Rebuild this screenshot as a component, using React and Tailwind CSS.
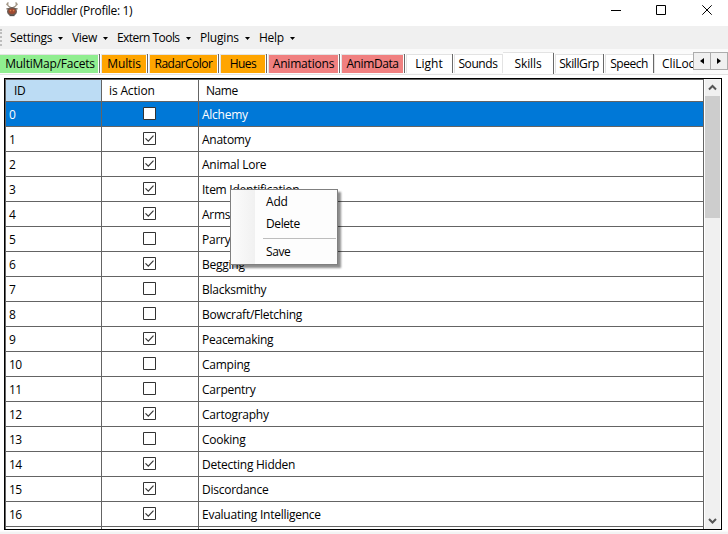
import React from 'react';

const menus = [
  { label: 'Settings', w: 'w-[62px]', t: 'tracking-[-0.28px]' },
  { label: 'View', w: 'w-[45px]', t: 'tracking-[-0.3px]' },
  { label: 'Extern Tools', w: 'w-[83px]', t: 'tracking-[-0.55px]' },
  { label: 'Plugins', w: 'w-[59px]', t: 'tracking-[-0.2px]' },
  { label: 'Help', w: 'w-[45px]', t: 'tracking-[-0.3px]' },
];

const tabs = [
  { label: 'MultiMap/Facets', w: 'w-[100px]', bg: 'bg-[#90ee90]', t: 'tracking-[-0.22px]', first: true },
  { label: 'Multis', w: 'w-[48px]', bg: 'bg-[#ffa500]', t: 'tracking-[-0.1px]' },
  { label: 'RadarColor', w: 'w-[71px]', bg: 'bg-[#ffa500]', t: 'tracking-[-0.5px]' },
  { label: 'Hues', w: 'w-[48px]', bg: 'bg-[#ffa500]', t: 'tracking-[-0.5px]' },
  { label: 'Animations', w: 'w-[73px]', bg: 'bg-[#f08080]', t: 'tracking-[-0.2px]' },
  { label: 'AnimData', w: 'w-[65px]', bg: 'bg-[#f08080]', t: 'tracking-[-0.4px]' },
  { label: 'Light', w: 'w-[48px]', bg: 'bg-white', t: 'tracking-[0px]' },
  { label: 'Sounds', w: 'w-[50px]', bg: 'bg-white', t: 'tracking-[-0.4px]', noEdge: true },
  { label: 'Skills', w: 'w-[51px]', bg: 'bg-white', t: 'tracking-[-0.1px]', selected: true },
  { label: 'SkillGrp', w: 'w-[50px]', bg: 'bg-white', t: 'tracking-[-0.4px]' },
  { label: 'Speech', w: 'w-[50px]', bg: 'bg-white', t: 'tracking-[-0.5px]' },
];

const skills = [
  ['Alchemy', false],
  ['Anatomy', true],
  ['Animal Lore', true],
  ['Item Identification', true],
  ['Arms Lore', true],
  ['Parrying', false],
  ['Begging', true],
  ['Blacksmithy', false],
  ['Bowcraft/Fletching', false],
  ['Peacemaking', true],
  ['Camping', false],
  ['Carpentry', false],
  ['Cartography', true],
  ['Cooking', false],
  ['Detecting Hidden', true],
  ['Discordance', true],
  ['Evaluating Intelligence', true],
];

function AppIcon() {
  return (
    <svg className="block" width="12" height="16" viewBox="0 0 12 16">
      <path d="M4.500 6C2 5.500 1 4 2.200 1.200M7.500 6c2.500-.5 3.500-2 2.300-4.800M1.500 4L.4 2.800M10.500 4l1.100-1.200" fill="none" stroke="#a39787" strokeWidth="1.300" />
      <path d="M.4 7.800h11.200" stroke="#8b8075" strokeWidth="1.500" />
      <ellipse cx="6" cy="10.400" rx="5" ry="4.400" fill="#6b5c54" />
      <ellipse cx="6" cy="10.200" rx="3.500" ry="2.700" fill="#a04a30" />
      <circle cx="4.500" cy="9.600" r=".8" fill="#d9804f" />
      <circle cx="7.600" cy="9.600" r=".8" fill="#d9804f" />
      <path d="M3.500 14.500h5" stroke="#55504e" strokeWidth="1.300" />
    </svg>
  );
}

function TitleBar() {
  return (
    <header className="flex h-[26px] shrink-0 items-start bg-white">
      <div className="pl-[6px] pt-[1px]"><AppIcon /></div>
      <div className="grow pl-[7.500px] pt-[2px] leading-[18px] tracking-[-0.33px]">UoFiddler (Profile: 1)</div>
      <svg className="block" width="120" height="22" viewBox="608 0 120 22" fill="none" stroke="#000">
        <path d="M611 10.500h10" />
        <path d="M656.500 5.500h9v9h-9z" />
        <path d="M702.300 5.300l9.400 9.400M711.700 5.300l-9.400 9.400" />
      </svg>
    </header>
  );
}

function MenuBar() {
  return (
    <nav className="flex h-[23px] shrink-0 items-center bg-[#f0f0f0]">
      <div className="h-[17px] w-px border-l-2 border-dotted border-[#bdbdbd]" />
      <div className="flex pl-[8px]">
        {menus.map((m) => (
          <div key={m.label} className={`flex shrink-0 items-center justify-between pr-[10px] leading-[18px] ${m.w} ${m.t}`}>
            <span className="whitespace-nowrap">{m.label}</span>
            <svg className="-mr-[1px] mt-[2px] block shrink-0" width="5" height="3" viewBox="0 0 5 3"><path d="M0 0h5L2.500 3z" fill="#000" /></svg>
          </div>
        ))}
      </div>
    </nav>
  );
}

function Tab({ tab }) {
  const { label, w, bg, t, selected, noEdge, first } = tab;
  return (
    <div className={`flex shrink-0 ${w} ${selected ? 'h-[22px] border-t border-[#e3e3e3] bg-white' : 'mt-[2px] h-[19px] bg-white'} ${selected || first ? '' : 'pl-px'}`}>
      <div className={`flex grow ${selected ? '' : 'border-t border-[#e3e3e3] pr-px'} ${selected || first ? '' : 'border-l'}`}>
        <div className={`flex grow items-center justify-center whitespace-nowrap leading-[18px] ${first ? 'pl-[2px]' : ''} ${bg} ${t}`}>{label}</div>
      </div>
      <div className={`w-px ${noEdge ? 'bg-[#e3e3e3]' : 'bg-[#696969]'}`} />
    </div>
  );
}

function TabStrip() {
  return (
    <div className="flex h-[24px] shrink-0 items-start overflow-hidden border-b border-[#e3e3e3] bg-[#fbfbfb] pt-px">
      {tabs.map((t) => <Tab key={t.label} tab={t} />)}
      <div className="mt-[2px] h-[19px] w-[39px] shrink-0 overflow-hidden border-l border-t border-[#e3e3e3] bg-white pl-[7px] leading-[18px] tracking-[-0.1px]">CliLoc</div>
      <div className="flex h-[18px] w-[35px] border border-[#acacac] bg-[#f0f0f0]">
        <div className="flex w-[17px] items-center justify-center border-r border-[#acacac]">
          <svg width="4" height="6" viewBox="0 0 4 6"><path d="M4 0v6L0 3z" /></svg>
        </div>
        <div className="flex grow items-center justify-center">
          <svg width="4" height="6" viewBox="0 0 4 6"><path d="M0 0v6l4-3z" /></svg>
        </div>
      </div>
    </div>
  );
}

function CheckBox({ checked }) {
  return (
    <svg className="block" width="13" height="13" viewBox="0 0 13 13" fill="none">
      <path d="M.5.5h12v12H.5z" fill="#fff" stroke="#333" />
      {checked && <path d="M2.500 6.300l2.800 2.800 5.200-5.400" stroke="#333" strokeWidth="1.200" />}
    </svg>
  );
}

function SkillGrid() {
  return (
    <div className="flex h-[450px] w-[699px] flex-col overflow-hidden border-l border-t border-[#646464] bg-white">
      <div className="flex h-[22px] shrink-0 border-b border-[#646464] leading-[22px]">
        <div className="w-[96px] border-r border-[#646464] bg-[#bcdcf4] pl-[8px] tracking-[-0.4px]">ID</div>
        <div className="w-[97px] border-r border-[#646464] pl-[7px] tracking-[-0.15px]">is Action</div>
        <div className="w-[505px] border-r border-[#646464] pl-[7px] tracking-[-0.45px]">Name</div>
      </div>
      {skills.map(([name, checked], i) => (
        <div key={name} className={`flex h-[25px] shrink-0 border-b border-[#646464] leading-[25px] ${i === 0 ? 'bg-[#0078d7] text-white' : ''}`}>
          <div className="w-[96px] border-r border-[#646464] pl-[3px] tracking-[-0.5px]">{i}</div>
          <div className="flex w-[97px] border-r border-[#646464] pl-[41px] pt-[5px]"><CheckBox checked={checked} /></div>
          <div className="w-[505px] border-r border-[#646464] pl-[3px] tracking-[-0.25px]">{name}</div>
        </div>
      ))}
      <div className="flex h-[3px] shrink-0">
        <div className="w-[96px] border-r border-[#646464]" />
        <div className="w-[97px] border-r border-[#646464]" />
        <div className="w-[505px] border-r border-[#646464]" />
      </div>
    </div>
  );
}

function ScrollBar() {
  return (
    <div className="ml-px flex w-[15px] flex-col items-center bg-[#f0f0f0]">
      <svg className="block shrink-0" width="15" height="17" viewBox="0 0 15 17"><path d="M4 10.500L7.500 7 11 10.500" fill="none" stroke="#555" strokeWidth="2" /></svg>
      <div className="h-[122px] w-full bg-[#cdcdcd]" />
      <div className="grow" />
      <svg className="block shrink-0" width="15" height="17" viewBox="0 0 15 17"><path d="M4 7l3.500 3.500L11 7" fill="none" stroke="#555" strokeWidth="2" /></svg>
    </div>
  );
}

function ContextMenu() {
  return (
    <div className="absolute left-[230px] top-[189px] flex h-[76px] w-[108px] border border-[#808080] bg-[#fdfdfd] shadow-[3px_3px_2px_rgba(0,0,0,0.45)]">
      <div className="w-[24px] shrink-0 bg-linear-to-r from-[#fcfcfc] to-[#f1f1f1]" />
      <div className="flex grow flex-col pt-px">
        <div className="h-[22px] pl-[11px] leading-[22px] tracking-[-0.2px]">Add</div>
        <div className="h-[22px] pl-[11px] leading-[22px] tracking-[-0.4px]">Delete</div>
        <div className="ml-[8px] mr-px mt-[3px] h-px bg-[#bdbdbd]" />
        <div className="mt-[2px] h-[22px] pl-[11px] leading-[22px] tracking-[-0.4px]">Save</div>
      </div>
    </div>
  );
}

export default function App() {
  return (
    <div className="relative flex h-[534px] w-[728px] flex-col overflow-hidden bg-white font-['Open_Sans','Noto_Sans',sans-serif] text-[12px] text-black">
      <TitleBar />
      <MenuBar />
      <div className="h-[2px] shrink-0 bg-[#fafafa]" />
      <TabStrip />
      <main className="flex h-[456px] w-[725px] shrink-0 bg-white pl-[4px] pt-[3px]">
        <div className="flex h-[452px] w-[718px] border border-[#000]">
          <SkillGrid />
          <ScrollBar />
        </div>
      </main>
      <div className="grow border-t border-[#fafafa] bg-[#f3f3f3]" />
      <ContextMenu />
    </div>
  );
}
